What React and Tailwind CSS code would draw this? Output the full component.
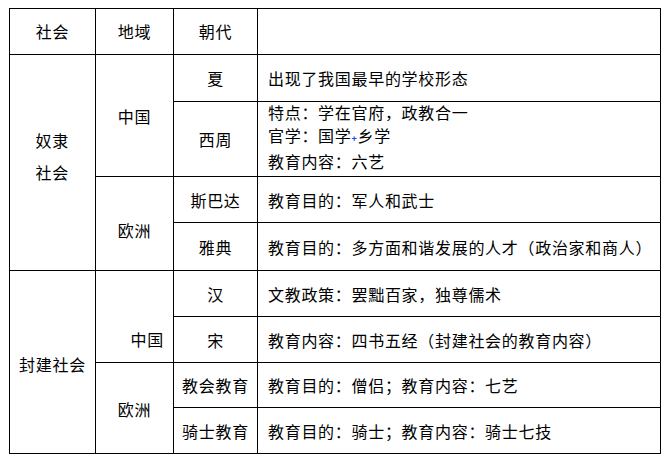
const cell = "border-r border-b border-black flex items-center";

const App = () => {
  return (
    <div className="w-[669px] h-[459px] bg-white pt-[8px] pl-[9px] text-black text-[16px] leading-[22px] tracking-[0.7px]" style={{ fontFamily: '"Noto Sans CJK SC", "Noto Sans", sans-serif' }}>
      <div className="grid grid-cols-[86px_78px_84px_403px] grid-rows-[46px_47px_75px_46px_48px_46px_46px_45px_46px] w-fit border-t border-l border-black">
        {/* Header */}
        <div className={`${cell} justify-center pb-[2px]`}>社会</div>
        <div className={`${cell} justify-center pb-[2px]`}>地域</div>
        <div className={`${cell} justify-center pb-[2px]`}>朝代</div>
        <div className={cell}></div>

        {/* 奴隶社会 */}
        <div className={`${cell} row-span-4 justify-center pb-[14px]`}>
          <div className="w-[34px] leading-[32px]">奴隶社会</div>
        </div>
        <div className={`${cell} row-span-2 justify-center`}>中国</div>
        <div className={`${cell} justify-center`}>夏</div>
        <div className={`${cell} pl-[10px]`}>出现了我国最早的学校形态</div>
        <div className={`${cell} justify-center`}>西周</div>
        <div className={`${cell} pl-[10px] pb-[4px] leading-[23px]`}>
          <div>
            <div>特点：学在官府，政教合一</div>
            <div>
              官学：国学<span className="inline-block w-[6px] text-[9px] text-blue-700 font-bold align-middle">+</span>乡学
            </div>
            <div>教育内容：六艺</div>
          </div>
        </div>
        <div className={`${cell} row-span-2 justify-center pt-[12px]`}>欧洲</div>
        <div className={`${cell} justify-center`}>斯巴达</div>
        <div className={`${cell} pl-[10px]`}>教育目的：军人和武士</div>
        <div className={`${cell} justify-center`}>雅典</div>
        <div className={`${cell} pl-[10px]`}>教育目的：多方面和谐发展的人才（政治家和商人）</div>

        {/* 封建社会 */}
        <div className={`${cell} row-span-4 justify-center pt-[4px]`}>封建社会</div>
        <div className={`${cell} row-span-2 justify-end items-end pr-[9px] pb-[12px]`}>中国</div>
        <div className={`${cell} justify-center`}>汉</div>
        <div className={`${cell} pl-[10px]`}>文教政策：罢黜百家，独尊儒术</div>
        <div className={`${cell} justify-center`}>宋</div>
        <div className={`${cell} pl-[10px]`}>教育内容：四书五经（封建社会的教育内容）</div>
        <div className={`${cell} row-span-2 justify-center pt-[2px]`}>欧洲</div>
        <div className={`${cell} justify-center`}>教会教育</div>
        <div className={`${cell} pl-[10px]`}>教育目的：僧侣；教育内容：七艺</div>
        <div className={`${cell} justify-center`}>骑士教育</div>
        <div className={`${cell} pl-[10px]`}>教育目的：骑士；教育内容：骑士七技</div>
      </div>
    </div>
  );
};

export default App;
